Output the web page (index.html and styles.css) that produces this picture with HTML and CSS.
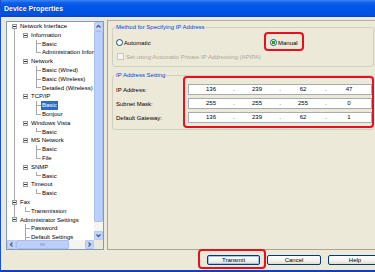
FILE: index.html
```html
<!DOCTYPE html>
<html>
<head>
<meta charset="utf-8">
<title>Device Properties</title>
<link rel="stylesheet" href="styles.css">
</head>
<body>
<div class="window">
  <div class="titlebar">Device Properties</div>
  <div class="main">
    <div class="tree">
      <div class="tree-view">
        <div class="row"><span class="c x dn"><i class="box"></i></span><span class="lbl">Network Interface</span></div>
        <div class="row"><span class="c v"></span><span class="c x"><i class="box"></i></span><span class="lbl">Information</span></div>
        <div class="row"><span class="c v"></span><span class="c"></span><span class="c t"></span><span class="lbl">Basic</span></div>
        <div class="row"><span class="c v"></span><span class="c"></span><span class="c l"></span><span class="lbl">Administration Information</span></div>
        <div class="row"><span class="c v"></span><span class="c x"><i class="box"></i></span><span class="lbl">Network</span></div>
        <div class="row"><span class="c v"></span><span class="c"></span><span class="c t"></span><span class="lbl">Basic (Wired)</span></div>
        <div class="row"><span class="c v"></span><span class="c"></span><span class="c t"></span><span class="lbl">Basic (Wireless)</span></div>
        <div class="row"><span class="c v"></span><span class="c"></span><span class="c l"></span><span class="lbl">Detailed (Wireless)</span></div>
        <div class="row"><span class="c v"></span><span class="c x"><i class="box"></i></span><span class="lbl">TCP/IP</span></div>
        <div class="row"><span class="c v"></span><span class="c"></span><span class="c t"></span><span class="lbl sel">Basic</span></div>
        <div class="row"><span class="c v"></span><span class="c"></span><span class="c l"></span><span class="lbl">Bonjour</span></div>
        <div class="row"><span class="c v"></span><span class="c x"><i class="box"></i></span><span class="lbl">Windows Vista</span></div>
        <div class="row"><span class="c v"></span><span class="c"></span><span class="c l"></span><span class="lbl">Basic</span></div>
        <div class="row"><span class="c v"></span><span class="c x"><i class="box"></i></span><span class="lbl">MS Network</span></div>
        <div class="row"><span class="c v"></span><span class="c"></span><span class="c t"></span><span class="lbl">Basic</span></div>
        <div class="row"><span class="c v"></span><span class="c"></span><span class="c l"></span><span class="lbl">File</span></div>
        <div class="row"><span class="c v"></span><span class="c x"><i class="box"></i></span><span class="lbl">SNMP</span></div>
        <div class="row"><span class="c v"></span><span class="c"></span><span class="c l"></span><span class="lbl">Basic</span></div>
        <div class="row"><span class="c v"></span><span class="c x"><i class="box"></i></span><span class="lbl">Timeout</span></div>
        <div class="row"><span class="c v"></span><span class="c"></span><span class="c l"></span><span class="lbl">Basic</span></div>
        <div class="row"><span class="c x up dn"><i class="box"></i></span><span class="lbl">Fax</span></div>
        <div class="row"><span class="c v"></span><span class="c l"></span><span class="lbl">Transmission</span></div>
        <div class="row"><span class="c x up"><i class="box"></i></span><span class="lbl">Administrator Settings</span></div>
        <div class="row"><span class="c"></span><span class="c t"></span><span class="lbl">Password</span></div>
        <div class="row"><span class="c"></span><span class="c t"></span><span class="lbl">Default Settings</span></div>
      </div>
      <div class="vscroll">
        <div class="sbtn"><svg width="9" height="9" viewBox="0 0 9 9"><path d="M2.5 5.5 L4.5 3.5 L6.5 5.5" fill="none" stroke="#4d6185" stroke-width="1.4"/></svg></div>
        <div class="vthumb"></div>
        <div class="vtrack"></div>
        <div class="sbtn"><svg width="9" height="9" viewBox="0 0 9 9"><path d="M2.5 3.5 L4.5 5.5 L6.5 3.5" fill="none" stroke="#4d6185" stroke-width="1.4"/></svg></div>
      </div>
      <div class="hscroll">
        <div class="sbtn"><svg width="9" height="9" viewBox="0 0 9 9"><path d="M5.5 2.5 L3.5 4.5 L5.5 6.5" fill="none" stroke="#4d6185" stroke-width="1.4"/></svg></div>
        <div class="hthumb"></div>
        <div class="htrack"></div>
        <div class="sbtn"><svg width="9" height="9" viewBox="0 0 9 9"><path d="M3.5 2.5 L5.5 4.5 L3.5 6.5" fill="none" stroke="#4d6185" stroke-width="1.4"/></svg></div>
      </div>
      <div class="corner"></div>
    </div>
    <div class="panel">
      <div class="group g1">
        <div class="gtitle">Method for Specifying IP Address</div>
        <div class="radios">
          <div class="radio first"><span class="rb"></span>Automatic</div>
          <div class="radio"><span class="rb on"></span>Manual</div>
        </div>
        <div class="check"><span class="cb"></span>Set using Automatic Private IP Addressing (APIPA)</div>
      </div>
      <div class="group g2">
        <div class="gtitle">IP Address Setting</div>
        <div class="iprows">
          <div class="iprow"><span class="iplabel">IP Address:</span><div class="ipfield"><span>136</span><span class="dot">.</span><span>239</span><span class="dot">.</span><span>62</span><span class="dot">.</span><span>47</span></div></div>
          <div class="iprow"><span class="iplabel">Subnet Mask:</span><div class="ipfield"><span>255</span><span class="dot">.</span><span>255</span><span class="dot">.</span><span>255</span><span class="dot">.</span><span>0</span></div></div>
          <div class="iprow"><span class="iplabel">Default Gateway:</span><div class="ipfield"><span>136</span><span class="dot">.</span><span>239</span><span class="dot">.</span><span>62</span><span class="dot">.</span><span>1</span></div></div>
        </div>
      </div>
    </div>
  </div>
  <div class="footer">
    <div class="btn default">Transmit</div>
    <div class="btn">Cancel</div>
    <div class="btn">Help</div>
  </div>
  <div class="hl hl-manual"></div>
  <div class="hl hl-ip"></div>
  <div class="hl hl-transmit"></div>
</div>
</body>
</html>
```

FILE: styles.css
```css
* { box-sizing: border-box; }
html, body { margin: 0; padding: 0; }
body {
  width: 375px;
  height: 272px;
  overflow: hidden;
  background: #ece9d8;
  font-family: "Liberation Sans", Arial, sans-serif;
  font-size: 6px;
  color: #000;
}
.window {
  position: relative;
  width: 375px;
  height: 272px;
  border-left: 1px solid #1a4fd8;
  border-bottom: 2px solid #0b3fc9;
  display: flex;
  flex-direction: column;
  overflow: hidden;
  --ln: #a8a8a8;
}
.titlebar {
  height: 17px;
  flex: none;
  background: linear-gradient(to bottom, #3a86f5 0, #0d5eea 3px, #0056e6 40%, #0052e0 85%, #0043cc 100%);
  color: #fff;
  font-weight: bold;
  font-size: 7px;
  line-height: 17px;
  padding-left: 3px;
  text-shadow: 0 0 1px #0a2a80;
}
.main {
  flex: none;
  height: 230px;
  margin-top: 3px;
  padding-left: 5px;
  display: flex;
  align-items: flex-start;
}
.tree {
  flex: none;
  width: 98px;
  height: 229px;
  margin-top: 1px;
  border: 1px solid #7f9db9;
  background: #fff;
  display: grid;
  grid-template-columns: 87px 9px;
  grid-template-rows: 218px 9px;
}
.tree-view {
  overflow: hidden;
  padding-left: 2px;
}
.row {
  height: 8.8px;
  line-height: 8.8px;
  display: flex;
  align-items: stretch;
  white-space: nowrap;
}
.c {
  flex: none;
  width: 11px;
  display: flex;
  align-items: center;
  justify-content: center;
}
.v { background: linear-gradient(var(--ln), var(--ln)) 5px 0 / 1px 100% no-repeat; }
.t {
  background:
    linear-gradient(var(--ln), var(--ln)) 5px 0 / 1px 100% no-repeat,
    linear-gradient(var(--ln), var(--ln)) 5px 50% / 5px 1px no-repeat;
}
.l {
  background:
    linear-gradient(var(--ln), var(--ln)) 5px 0 / 1px 50% no-repeat,
    linear-gradient(var(--ln), var(--ln)) 5px 50% / 5px 1px no-repeat;
}
.x.dn { background: linear-gradient(var(--ln), var(--ln)) 5px 100% / 1px 50% no-repeat; }
.x.up { background: linear-gradient(var(--ln), var(--ln)) 5px 0 / 1px 50% no-repeat; }
.x.up.dn { background: linear-gradient(var(--ln), var(--ln)) 5px 0 / 1px 100% no-repeat; }
.box {
  display: block;
  width: 5px;
  height: 5px;
  margin-left: -1px;
  border: 1px solid #8c9aa6;
  background: linear-gradient(#333, #333) center / 3px 1px no-repeat, #fff;
}
.lbl {
  padding: 0 1px;
  margin-left: -1px;
}
.lbl.sel {
  background: #316ac5;
  color: #fff;
}
.vscroll {
  display: flex;
  flex-direction: column;
  background: #f4f3ee;
}
.sbtn {
  flex: none;
  width: 9px;
  height: 9px;
  background: #c4d5fc;
  border: 1px solid #b4c8f5;
  border-radius: 1px;
  display: flex;
  align-items: center;
  justify-content: center;
}
.sbtn svg { display: block; margin: -1px; }
.vthumb {
  height: 191px;
  flex: none;
  background: #bccffa;
  border: 1px solid #a9bfee;
  border-radius: 1px;
}
.vtrack { flex: 1; background: #f5f4ef; }
.hscroll {
  display: flex;
  background: #f4f3ee;
}
.hthumb {
  width: 53px;
  flex: none;
  background: #bccffa linear-gradient(#9fb6e8, #9fb6e8) center / 5px 3px no-repeat;
  border: 1px solid #a9bfee;
  border-radius: 1px;
}
.htrack { flex: 1; background: #f5f4ef; }
.corner { background: #ece9d8; }

.panel {
  flex: 1;
  height: 230px;
  margin-left: 3px;
  border-top: 1px solid #b5b1a1;
  border-left: 1px solid #a9a695;
  border-bottom: 1px solid #a9a695;
  padding-left: 4px;
  padding-right: 1px;
}
.group {
  border: 1px solid #d0d0bf;
  border-radius: 3px;
  padding-left: 3px;
}
.g1 { margin-top: 6px; height: 40px; }
.g2 { margin-top: 8px; height: 55px; }
.gtitle {
  width: fit-content;
  margin-top: -4px;
  margin-left: -1px;
  padding: 0 1px;
  line-height: 7px;
  background: #ece9d8;
  color: #0046d5;
}
.radios {
  margin-top: 7px;
  height: 9px;
  display: flex;
  align-items: center;
}
.radio {
  display: flex;
  align-items: center;
  white-space: nowrap;
}
.radio.first { width: 154px; }
.rb {
  width: 7px;
  height: 7px;
  border-radius: 50%;
  border: 1px solid #1c5180;
  background: radial-gradient(circle at 60% 60%, #fff 40%, #e2e0d6);
  margin-right: 1px;
  flex: none;
}
.rb.on {
  background: radial-gradient(circle, #2fb52f 0, #1f9a1f 1.5px, #fff 2px, #fff 100%);
}
.check {
  margin-top: 5px;
  height: 9px;
  display: flex;
  align-items: center;
  color: #aca899;
  white-space: nowrap;
}
.cb {
  width: 7px;
  height: 7px;
  border: 1px solid #cac8bb;
  background: #f6f5f0;
  margin-left: 1px;
  margin-right: 2px;
  flex: none;
}
.iprows {
  margin-top: 5px;
  display: flex;
  flex-direction: column;
  gap: 3px;
}
.iprow {
  display: flex;
  align-items: center;
  height: 11px;
}
.iplabel {
  width: 72px;
  flex: none;
  white-space: nowrap;
}
.ipfield {
  width: 184px;
  height: 11px;
  flex: none;
  border: 1px solid #a5acb2;
  background: #fff;
  display: grid;
  grid-template-columns: 1fr 2px 1fr 2px 1fr 2px 1fr;
  align-items: center;
  text-align: center;
  line-height: 9px;
}
.dot { width: 2px; }

.footer {
  flex: none;
  height: 20px;
  padding-top: 5px;
  padding-left: 206px;
  display: flex;
  gap: 7px;
  overflow: hidden;
}
.btn {
  flex: none;
  width: 54px;
  height: 10px;
  border: 1px solid #003c74;
  border-radius: 2px;
  background: linear-gradient(#ffffff, #f3f2ec 60%, #dedbcf);
  text-align: center;
  line-height: 8px;
}
.btn.default {
  width: 53px;
  box-shadow: inset 0 0 0 1px #a8c4f0;
}
.hl {
  position: absolute;
  border: 2px solid #e8101e;
  border-radius: 4px;
}
.hl-manual { left: 263px; top: 32px; width: 40px; height: 19px; }
.hl-ip { left: 182px; top: 76px; width: 191px; height: 52px; }
.hl-transmit { left: 197px; top: 249px; width: 68px; height: 20px; }
```
